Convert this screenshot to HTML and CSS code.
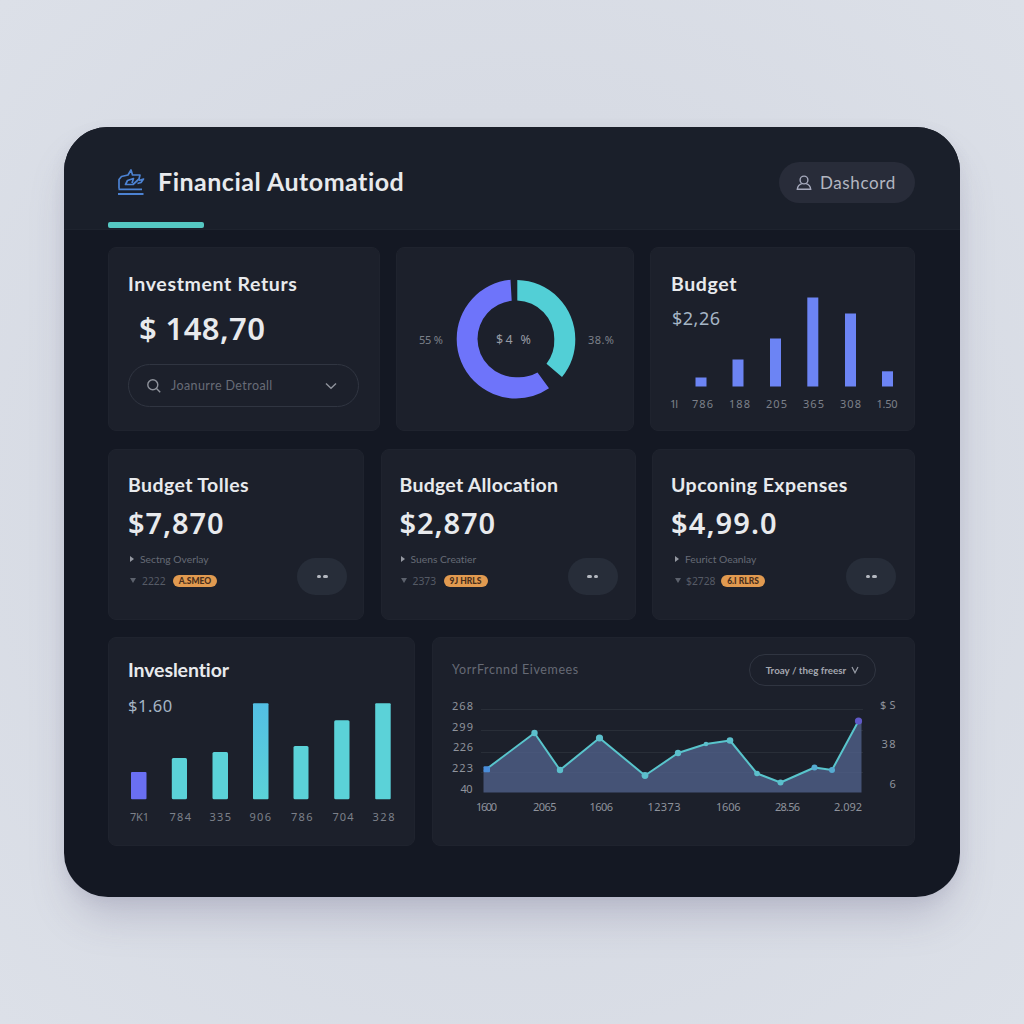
FILE: index.html
```html
<!DOCTYPE html>
<html lang="en">
<head>
<meta charset="utf-8">
<title>Financial Automatiod</title>
<link rel="stylesheet" href="styles.css">
</head>
<body>
<div class="panel">
  <header class="header">
    <div class="brand">
      <svg class="brand-icon" width="30" height="30" viewBox="116 167 30 30">
        <path d="M119 188.500V179.500L121.500 176.500L128 175L131 170L132.500 175L140 175L139 179L133 184.500L125.500 184.500L127.500 180.500L133.500 178.500L132 183M137.500 183.500L141 182.500L143.500 179L139 180.500M118.500 189.300H142"/>
        <path class="brand-base" d="M118 194H143.500"/>
      </svg>
      <h1 class="brand-title">Financial Automatiod</h1>
    </div>
    <div class="user-pill">
      <svg width="16" height="16" viewBox="0 0 16 16"><circle cx="8" cy="5" r="3.900"/><path d="M5.800 8.600C3 9.500 1.600 11.500 1.300 14.300H14.700C14.400 11.500 13 9.500 10.200 8.600"/></svg>
      <span>Dashcord</span>
    </div>
    <div class="tab-line"></div>
  </header>

  <main class="content">
    <section class="row row-top">
      <article class="card returns">
        <h2 class="title t-returns">Investment Returs</h2>
        <div class="amount amount-lg">$ 148,70</div>
        <div class="select">
          <svg width="16" height="16" viewBox="0 0 16 16"><circle cx="6.800" cy="6.800" r="5"/><path d="M10.500 10.500L14.200 14.200"/></svg>
          <span class="select-text">Joanurre Detroall</span>
          <svg width="12" height="8" viewBox="0 0 12 8"><path d="M1 1.500L6 6.300L11 1.500"/></svg>
        </div>
      </article>

      <article class="card donut">
        <svg class="chart" viewBox="396 247 238 184">
          <path class="seg-violet" d="M510.500 279.800A59.300 59.300 0 0 0 456.700 339A59.300 59.300 0 0 0 516 398.500A59.300 59.300 0 0 0 549 388.300L537.500 372.500A38.400 38.400 0 0 1 516 377.200A38.400 38.400 0 0 1 477.500 339A38.400 38.400 0 0 1 511.700 300.800Z"/>
          <path class="seg-teal" d="M517.300 280A59.200 59.200 0 0 1 575.300 339A59.200 59.200 0 0 1 562 377L546.500 363.800A38.400 38.400 0 0 0 554.300 339A38.400 38.400 0 0 0 517.300 300.500Z"/>
          <g class="label">
            <text x="419" y="343.500" textLength="24">55 %</text>
            <text x="588" y="343.500" textLength="26">38.%</text>
            <text class="label-mid" x="496" y="343.500" textLength="35">$4 %</text>
          </g>
        </svg>
      </article>

      <article class="card stacked budget">
        <svg class="chart" viewBox="650 247 265 184">
          <g class="bar-blue">
            <rect x="695.500" y="377.500" width="11" height="9"/>
            <rect x="732.500" y="359.500" width="11" height="27"/>
            <rect x="770" y="338.500" width="11" height="48"/>
            <rect x="807.300" y="297.500" width="11" height="89"/>
            <rect x="845" y="313.500" width="11" height="73"/>
            <rect x="882" y="371.300" width="11" height="15.200"/>
          </g>
          <g class="label">
            <text x="670" y="407.500" textLength="8">1l</text>
            <text x="692" y="407.500" textLength="21">786</text>
            <text x="729" y="407.500" textLength="21">188</text>
            <text x="766" y="407.500" textLength="21">205</text>
            <text x="803" y="407.500" textLength="21">365</text>
            <text x="840" y="407.500" textLength="21">308</text>
            <text x="876.500" y="407.500" textLength="21">1.50</text>
          </g>
        </svg>
        <div class="card-head">
          <h2 class="title t-budget">Budget</h2>
          <div class="sub-amount">$2,26</div>
        </div>
      </article>
    </section>

    <section class="row row-mid">
      <article class="card stat stat-a">
        <h2 class="title">Budget Tolles</h2>
        <div class="amount">$7,870</div>
        <div class="meta"><i class="tri"></i><span>Sectng Overlay</span></div>
        <div class="meta meta-low"><i class="tri-down"></i><span class="num">2222</span><b class="tag">A.SMEO</b></div>
        <div class="more"><i></i><i></i></div>
      </article>
      <article class="card stat stat-b">
        <h2 class="title">Budget Allocation</h2>
        <div class="amount">$2,870</div>
        <div class="meta"><i class="tri"></i><span>Suens Creatier</span></div>
        <div class="meta meta-low"><i class="tri-down"></i><span class="num">2373</span><b class="tag">9J HRLS</b></div>
        <div class="more"><i></i><i></i></div>
      </article>
      <article class="card stat stat-c">
        <h2 class="title">Upconing Expenses</h2>
        <div class="amount">$4,99.0</div>
        <div class="meta"><i class="tri"></i><span>Feurict Oeanlay</span></div>
        <div class="meta meta-low"><i class="tri-down"></i><span class="num">$2728</span><b class="tag">6.I RLRS</b></div>
        <div class="more"><i></i><i></i></div>
      </article>
    </section>

    <section class="row row-low">
      <article class="card stacked invest">
        <svg class="chart" viewBox="108 637 307 209">
          <defs>
            <linearGradient id="sky" x1="0" y1="0" x2="0" y2="1"><stop offset="0" stop-color="#53bfe4"/><stop offset="1" stop-color="#5bd2d8"/></linearGradient>
          </defs>
          <rect class="bar-violet" x="131" y="772" width="15.500" height="27.200" rx="1"/>
          <g class="bar-teal">
            <rect x="171.800" y="758" width="15.200" height="41.200" rx="1.500"/>
            <rect x="212.500" y="752" width="15.500" height="47.200" rx="1.500"/>
            <rect x="253" y="703.200" width="15.500" height="96" rx="1" fill="url(#sky)"/>
            <rect x="293.500" y="746" width="15" height="53.200" rx="1.500"/>
            <rect x="334.200" y="720.300" width="15.300" height="78.900" rx="1.500"/>
            <rect x="375.200" y="703.200" width="15.500" height="96" rx="1"/>
          </g>
          <g class="label">
            <text x="130" y="821.300" textLength="19">7K1</text>
            <text x="169.500" y="821.300" textLength="21.500">784</text>
            <text x="209.500" y="821.300" textLength="21.500">335</text>
            <text x="249.500" y="821.300" textLength="21.500">906</text>
            <text x="291" y="821.300" textLength="21.500">786</text>
            <text x="332.500" y="821.300" textLength="21">704</text>
            <text x="372.500" y="821.300" textLength="22">328</text>
          </g>
        </svg>
        <div class="card-head">
          <h2 class="title t-invest">Inveslentior</h2>
          <div class="sub-amount">$1.60</div>
        </div>
      </article>

      <article class="card stacked trend">
        <svg class="chart" viewBox="432 637 483 209">
          <path class="grid" d="M481 709.500H863M481 730.500H863M481 752.500H863M481 772.500H863"/>
          <path class="area" d="M483.500 792.500V770L486.500 769L534.500 733L560 770L599.500 738L645 775.500L678 753L706 744L730 740.500L757 773.500L780.500 782.500L814.500 767.500L832 770L858.500 721L861.500 722V792.500Z"/>
          <path class="line" d="M486.500 769L534.500 733L560 770L599.500 738L645 775.500L678 753L706 744L730 740.500L757 773.500L780.500 782.500L814.500 767.500L832 770L858.500 721"/>
          <g class="dots">
            <rect class="dot-blue" x="483.500" y="766.300" width="6.500" height="6" rx="1"/>
            <circle cx="534.500" cy="733" r="3.200"/><circle cx="560" cy="770" r="3.200"/><circle cx="599.500" cy="738" r="3.600"/>
            <circle cx="645" cy="775.500" r="3.400"/><circle cx="678" cy="753" r="3.200"/><circle cx="706" cy="744" r="2.300"/>
            <circle cx="730" cy="740.500" r="3.300"/><circle cx="757" cy="773.500" r="2.800"/><circle cx="780.500" cy="782.500" r="3"/>
            <circle class="dot-sky" cx="814.500" cy="767.500" r="3"/><circle class="dot-sky" cx="832" cy="770" r="3"/>
            <circle class="dot-violet" cx="858.500" cy="721" r="3.600"/>
          </g>
          <g class="label axis">
            <text x="452" y="709.500" textLength="21">268</text>
            <text x="452" y="730.500" textLength="21">299</text>
            <text x="453" y="751" textLength="20">226</text>
            <text x="452" y="771.500" textLength="21">223</text>
            <text x="460.500" y="793" textLength="12">40</text>
            <text x="476" y="811.300" textLength="21">1600</text>
            <text x="533" y="811.300" textLength="23.500">2065</text>
            <text x="589.500" y="811.300" textLength="23.500">1606</text>
            <text x="647.500" y="811.300" textLength="33">12373</text>
            <text x="716" y="811.300" textLength="24.500">1606</text>
            <text x="775" y="811.300" textLength="25">28.56</text>
            <text x="834" y="811.300" textLength="28">2.092</text>
            <text x="880" y="709" textLength="15.500">$S</text>
            <text x="881.500" y="747.500" textLength="14">38</text>
            <text x="889.500" y="787.500">6</text>
          </g>
        </svg>
        <div class="trend-head">
          <h2 class="trend-title">YorrFrcnnd Eivemees</h2>
          <div class="range"><span>Troay / theg freesr</span><svg width="8" height="8" viewBox="0 0 8 8"><path d="M1 1L4 6.800L7 1"/></svg></div>
        </div>
      </article>
    </section>
  </main>
</div>
</body>
</html>
```
FILE: styles.css
```css
* { box-sizing: border-box; }

body {
  margin: 0;
  width: 1024px;
  height: 1024px;
  overflow: hidden;
  padding: 127px 64px;
  background: radial-gradient(ellipse at 50% 50%, #d3d7e1 0%, #d7dbe4 55%, #dce0e8 100%);
  font-family: Lato, "Noto Sans", sans-serif;
  font-variant-ligatures: none;
  color: #e8eaed;
}

h1, h2 { margin: 0; font-weight: 500; }
svg { display: block; flex: none; fill: none; }

.panel {
  width: 896px;
  height: 769.5px;
  border-radius: 44px;
  overflow: hidden;
  background: #141823;
  box-shadow: 0 26px 40px -8px rgba(120, 118, 150, .32), 0 4px 14px rgba(120, 124, 150, .12);
}

.header {
  height: 103px;
  padding: 35px 45px 0 44px;
  display: grid;
  grid-template-columns: 1fr auto;
  grid-template-rows: 42px 18px 6px;
  background: #1a1f2a;
  border-bottom: 1px solid #1e232e;
}

.brand { display: flex; align-items: flex-start; gap: 12px; padding-left: 8px; }
.brand-icon { margin-top: 5px; stroke: #4c82d2; stroke-width: 1.7; stroke-linejoin: round; }
.brand-base { stroke-width: 2.2; }
.brand-title { font-size: 25px; line-height: 39px; font-weight: 700; letter-spacing: .5px; white-space: nowrap; }

.user-pill {
  width: 136px;
  height: 41px;
  padding-left: 17px;
  border-radius: 21px;
  display: flex;
  align-items: center;
  gap: 8px;
  background: #282c39;
  color: #b3b6c1;
  font-size: 17px;
  letter-spacing: .6px;
}
.user-pill svg { stroke: #a5a9bc; stroke-width: 1.4; }

.tab-line { grid-row: 3; width: 96px; height: 6px; border-radius: 2px; background: #55c8c3; }

.content { display: flex; flex-direction: column; gap: 17.5px; padding: 17px 45px 0 44px; }
.row { display: flex; justify-content: space-between; }
.row-top { height: 184px; }
.row-mid { height: 171px; }
.row-low { height: 209px; }

.card { border-radius: 8px; background: #1c202b; border: 1px solid #1f232e; }
.stacked { display: grid; }
.stacked > * { grid-area: 1 / 1; }
.chart { width: calc(100% + 2px); height: calc(100% + 2px); margin: -1px; }

.returns { width: 272px; padding: 24px 19px 0; }
.donut { width: 238px; }
.budget { width: 265px; }
.stat { padding: 23px 19px 0; display: grid; grid-template-columns: 1fr auto; grid-template-rows: 30px 46px 21px 22px 1fr; }
.stat > .title, .stat > .amount { grid-column: 1 / -1; }
.stat-a { width: 256px; padding-right: 16px; }
.stat-b { width: 255px; padding-left: 18px; padding-right: 17px; }
.stat-c { width: 263px; padding-left: 18px; padding-right: 18px; }
.invest { width: 307px; }
.trend { width: 483px; }

.title { font-size: 19.5px; line-height: 24px; font-weight: 700; letter-spacing: .25px; white-space: nowrap; }
.t-returns { letter-spacing: .65px; }
.t-budget { letter-spacing: .6px; }
.t-invest { letter-spacing: -.1px; }
.stat-a .title { letter-spacing: .4px; }
.stat-c .title { letter-spacing: .45px; }
.amount {
  font-family: "Noto Sans", sans-serif;
  font-size: 29px;
  line-height: 40px;
  font-weight: 650;
  letter-spacing: .9px;
  white-space: nowrap;
}
.amount-lg { margin: 12px 0 0 11px; font-size: 31px; letter-spacing: .4px; }
.stat-c .amount { letter-spacing: 1.1px; }

.select {
  width: 231px;
  height: 43px;
  margin-top: 16px;
  padding: 0 21px 0 17px;
  border: 1px solid #303541;
  border-radius: 22px;
  display: flex;
  align-items: center;
  color: #686c77;
  font-size: 12.5px;
  letter-spacing: .4px;
}
.select svg { stroke: #8f939c; stroke-width: 1.4; }
.select-text { flex: 1; padding-left: 9px; }

.card-head { padding: 24px 20px 0; }
.invest .card-head { padding: 20px 19px 0; }
.sub-amount { margin: 10px 0 0 1px; font-family: "Noto Sans", sans-serif; font-size: 18px; line-height: 24px; letter-spacing: .5px; color: #a5b5c5; }
.invest .sub-amount { margin: 12px 0 0 0; font-size: 16.5px; }

.label { fill: #7c808a; font-family: "Noto Sans", sans-serif; font-size: 11px; }
.label-mid { fill: #979ba4; font-size: 12.5px; }
.axis { fill: #8f939c; }

.seg-violet { fill: #6e74fa; }
.seg-teal { fill: #52cfd6; }
.bar-blue { fill: #6c84f4; }
.bar-violet { fill: #6a6ff2; }
.bar-teal { fill: #5bd2d8; }

.meta { grid-column: 1; display: flex; align-items: center; height: 20px; padding-left: 2px; font-size: 10.3px; color: #666b76; white-space: nowrap; }
.meta-low { height: 22px; }
.meta span { margin-left: 6px; }
.meta .num { width: 25px; font-family: "Noto Sans", sans-serif; color: #565b66; }
.tri { border-left: 4px solid #9498a1; border-top: 3px solid transparent; border-bottom: 3px solid transparent; }
.tri-down { border-top: 5px solid #5c616c; border-left: 3.5px solid transparent; border-right: 3.5px solid transparent; }
.stat-b .meta { padding-left: 1px; }
.stat-c .meta { padding-left: 4px; }
.stat-c .num { width: 29px; margin-left: 5px; }
.tag {
  width: 44px;
  height: 12px;
  margin-left: 6px;
  border-radius: 6px;
  background: #e19a50;
  color: #4a2f1c;
  font-size: 8.5px;
  line-height: 12px;
  font-weight: 900;
  text-align: center;
}
.more {
  grid-column: 2;
  grid-row: 3 / 6;
  width: 50px;
  height: 37px;
  margin-top: 9px;
  border-radius: 19px;
  display: flex;
  align-items: center;
  justify-content: center;
  gap: 2px;
  background: #272d39;
}
.more i { width: 4.5px; height: 3px; border-radius: 1.5px; background: #b4b8c0; }

.grid { stroke: #292e38; stroke-width: 1; }
.area { fill: #50608a; fill-opacity: .8; }
.line { stroke: #59c5cc; stroke-width: 2; stroke-linejoin: round; }
.dots { fill: #5cbfcc; }
.dot-blue { fill: #4a8edb; }
.dot-sky { fill: #56abd1; }
.dot-violet { fill: #6059c8; }

.trend-head { display: flex; align-items: flex-start; justify-content: space-between; padding: 16px 38px 0 19px; }
.trend-title { padding-top: 7px; font-size: 12.5px; line-height: 18px; font-weight: 400; letter-spacing: .6px; color: #666a75; white-space: nowrap; }
.range {
  width: 127px;
  height: 32px;
  border: 1px solid #303541;
  border-radius: 16px;
  display: flex;
  align-items: center;
  justify-content: center;
  gap: 5px;
  color: #a4a7b0;
  font-size: 9.8px;
  font-weight: 700;
  white-space: nowrap;
}
.range svg { stroke: #989ca6; stroke-width: 1.2; }
```
